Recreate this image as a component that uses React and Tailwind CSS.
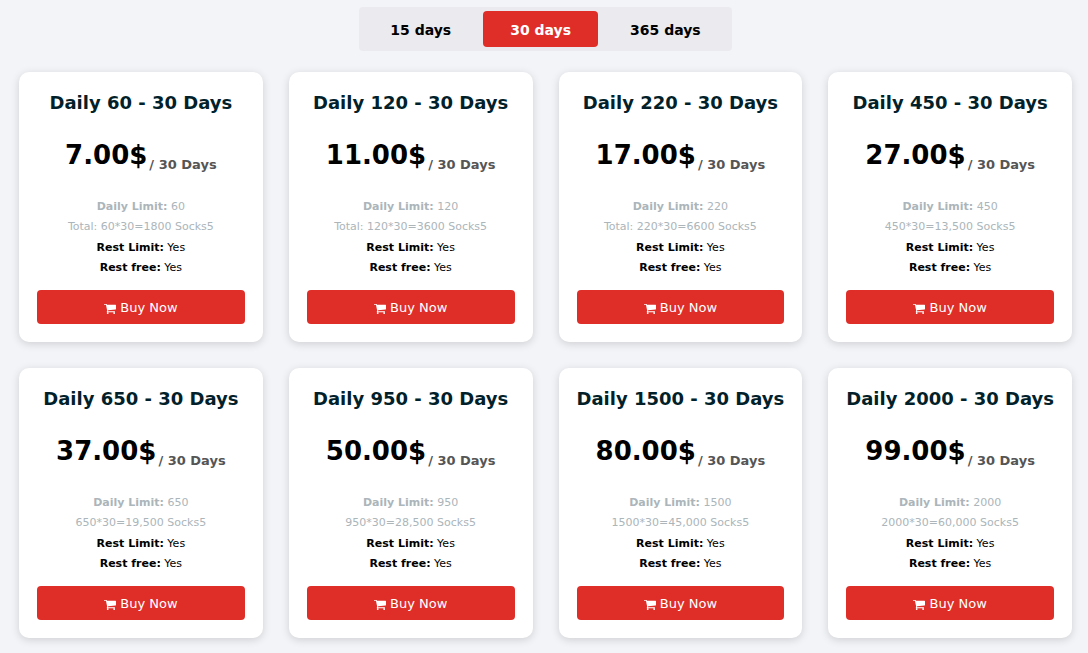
import React, { useState } from 'react'

const periods = ['15 days', '30 days', '365 days']

const plans = [
  { limit: 60, price: '7.00', total: 'Total: 60*30=1800 Socks5' },
  { limit: 120, price: '11.00', total: 'Total: 120*30=3600 Socks5' },
  { limit: 220, price: '17.00', total: 'Total: 220*30=6600 Socks5' },
  { limit: 450, price: '27.00', total: '450*30=13,500 Socks5' },
  { limit: 650, price: '37.00', total: '650*30=19,500 Socks5' },
  { limit: 950, price: '50.00', total: '950*30=28,500 Socks5' },
  { limit: 1500, price: '80.00', total: '1500*30=45,000 Socks5' },
  { limit: 2000, price: '99.00', total: '2000*30=60,000 Socks5' },
]

function CartIcon () {
  return (
    <svg className="h-[13px] w-3 fill-current" viewBox="0 0 1664 1792" aria-hidden="true">
      <path d="M640 1536q0 52-38 90t-90 38-90-38-38-90 38-90 90-38 90 38 38 90zm896 0q0 52-38 90t-90 38-90-38-38-90 38-90 90-38 90 38 38 90zm128-1088v512q0 24-16.5 42.5t-40.5 21.5l-1044 122q13 60 13 70 0 16-24 64h920q26 0 45 19t19 45-19 45-45 19h-1024q-26 0-45-19t-19-45q0-11 8-31.5t16-36 21.5-40 15.5-29.5l-177-823h-204q-26 0-45-19t-19-45 19-45 45-19h256q16 0 28.5 6.5t19.5 15.5 13 24.5 8 26 5.5 29.5 4.5 26h1201q26 0 45 19t19 45z" />
    </svg>
  )
}

function PeriodTabs ({ active, onChange }) {
  return (
    <div className="flex justify-center">
      <div className="flex gap-[5px] rounded-sm bg-[#ebeaef] p-1">
        {periods.map((period) => (
          <button
            key={period}
            type="button"
            aria-pressed={period === active}
            onClick={() => onChange(period)}
            className={`h-9 rounded-sm px-[27px] pt-px text-sm font-bold whitespace-nowrap cursor-pointer ${period === active ? 'bg-[#df2d28] text-white' : 'text-black'}`}
          >
            {period}
          </button>
        ))}
      </div>
    </div>
  )
}

function PlanCard ({ plan }) {
  return (
    <div className="rounded-[10px] bg-white p-[18px] text-center shadow-[0_2px_8px_rgba(0,0,0,0.15)]">
      <h2 className="flex justify-center text-lg leading-[26px] font-bold text-[#021f2a] whitespace-nowrap">Daily {plan.limit} - 30 Days</h2>
      <div className="mt-[18px] flex h-[42px] items-center justify-center gap-0.5 whitespace-nowrap font-bold">
        <span className="text-[26px] leading-10 text-black">{plan.price}$</span>
        <span className="mt-5 text-[13px] leading-4 text-[#555555]">/ 30 Days</span>
      </div>
      <ul className="mt-[21px] text-[11px] leading-5 text-black">
        <li className="text-[#abb5ba]"><b>Daily Limit:</b> {plan.limit}</li>
        <li className="text-[#abb5ba]">{plan.total}</li>
        <li className="mt-px"><b>Rest Limit:</b> Yes</li>
        <li><b>Rest free:</b> Yes</li>
      </ul>
      <button type="button" className="mt-3 flex h-[34px] w-full items-center justify-center gap-1 rounded-sm bg-[#df2d28] pt-0.5 text-[13px] text-white cursor-pointer">
        <CartIcon />
        Buy Now
      </button>
    </div>
  )
}

export default function App () {
  let [period, setPeriod] = useState('30 days')

  return (
    <main className="min-h-screen bg-[#f3f4f8] pt-[7px] pr-4 pb-[15px] pl-[19px] font-['Verdana','DejaVu_Sans',sans-serif]">
      <PeriodTabs active={period} onChange={setPeriod} />
      <div className="mt-[21px] grid grid-cols-1 gap-[26px] sm:grid-cols-2 lg:grid-cols-4">
        {plans.map((plan) => <PlanCard key={plan.limit} plan={plan} />)}
      </div>
    </main>
  )
}
